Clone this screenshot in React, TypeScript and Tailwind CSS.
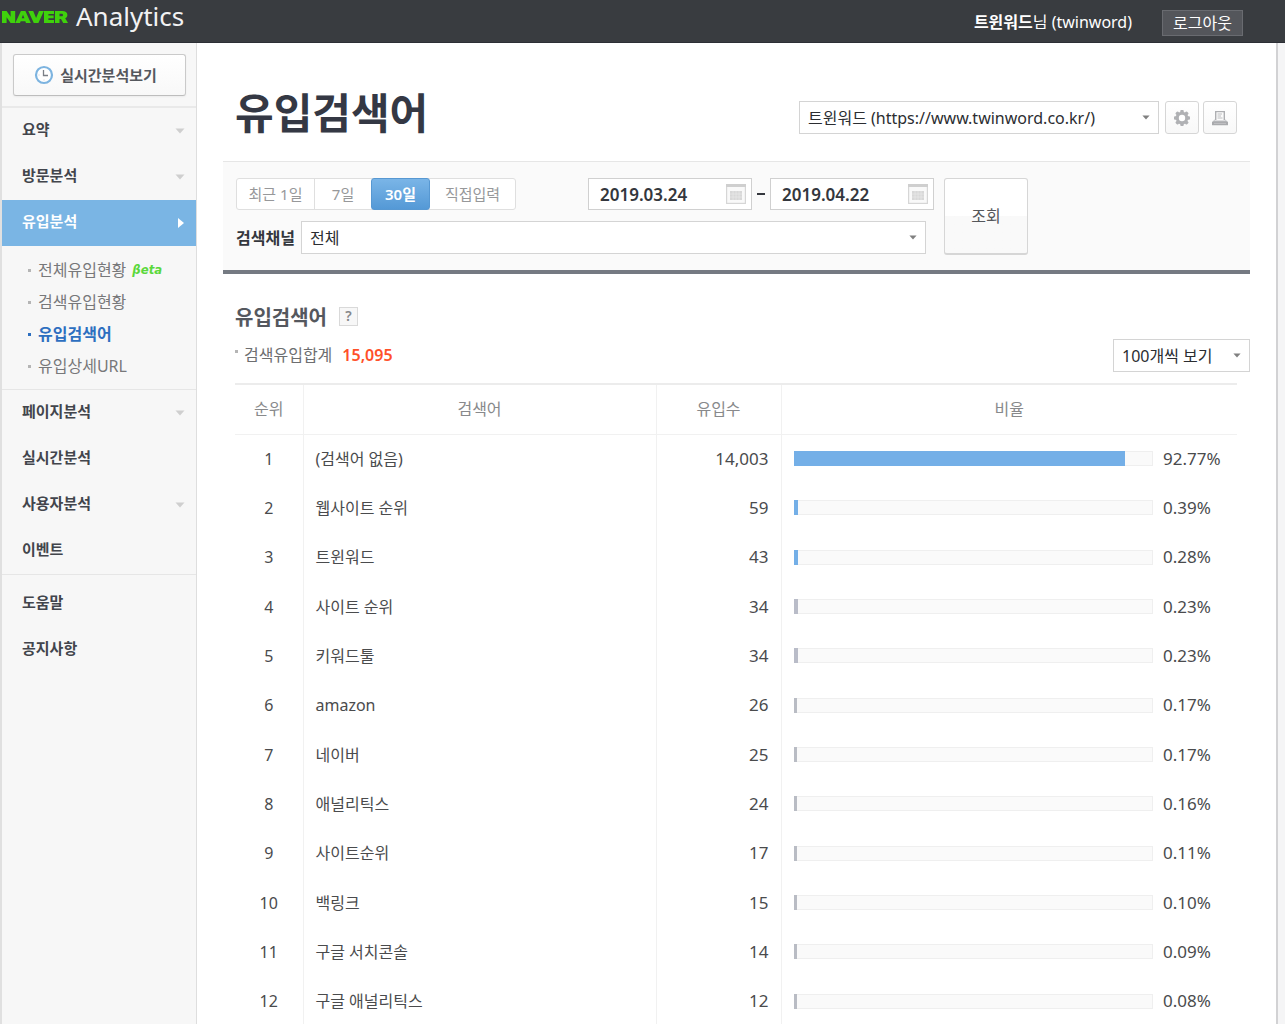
import type { ReactNode } from "react";

const fontBody = "font-['Noto_Sans','Noto_Sans_CJK_KR',sans-serif]";

type Row = { rank: number; keyword: string; visits: string; ratio: number; tone: "blue" | "gray" };

const rows: Row[] = [
  { rank: 1, keyword: "(검색어 없음)", visits: "14,003", ratio: 92.77, tone: "blue" },
  { rank: 2, keyword: "웹사이트 순위", visits: "59", ratio: 0.39, tone: "blue" },
  { rank: 3, keyword: "트윈워드", visits: "43", ratio: 0.28, tone: "blue" },
  { rank: 4, keyword: "사이트 순위", visits: "34", ratio: 0.23, tone: "gray" },
  { rank: 5, keyword: "키워드툴", visits: "34", ratio: 0.23, tone: "gray" },
  { rank: 6, keyword: "amazon", visits: "26", ratio: 0.17, tone: "gray" },
  { rank: 7, keyword: "네이버", visits: "25", ratio: 0.17, tone: "gray" },
  { rank: 8, keyword: "애널리틱스", visits: "24", ratio: 0.16, tone: "gray" },
  { rank: 9, keyword: "사이트순위", visits: "17", ratio: 0.11, tone: "gray" },
  { rank: 10, keyword: "백링크", visits: "15", ratio: 0.1, tone: "gray" },
  { rank: 11, keyword: "구글 서치콘솔", visits: "14", ratio: 0.09, tone: "gray" },
  { rank: 12, keyword: "구글 애널리틱스", visits: "12", ratio: 0.08, tone: "gray" },
];

function CaretDown({ className }: { className: string }) {
  return (
    <svg viewBox="0 0 10 6" className={className} aria-hidden="true">
      <path d="M0.5 0.5h9L5 5.5z" fill="currentColor" />
    </svg>
  );
}

function ClockIcon() {
  return (
    <svg width="20" height="20" viewBox="0 0 20 20" fill="none" aria-hidden="true">
      <circle cx="10" cy="10" r="8" fill="#fff" stroke="#7db4e0" strokeWidth="2.2" />
      <path d="M9.5 5v5.5H14" stroke="#7b7f86" strokeWidth="1.3" />
      <path d="M10 15.5v-1M4.5 10h1" stroke="#c4cbd2" strokeWidth="1" />
    </svg>
  );
}

function GearIcon() {
  return (
    <svg width="18" height="18" viewBox="0 0 18 18" aria-hidden="true">
      <g fill="#b0b1b4">
        {[0, 45, 90, 135].map((angle) => (
          <rect key={angle} x="7.25" y="1" width="3.5" height="16" rx="1" transform={`rotate(${angle} 9 9)`} />
        ))}
        <circle cx="9" cy="9" r="6.3" />
      </g>
      <circle cx="9" cy="9" r="3.2" fill="#fff" />
    </svg>
  );
}

function PrinterIcon() {
  return (
    <svg width="18" height="18" viewBox="0 0 18 18" fill="none" aria-hidden="true">
      <path d="M4.7 11V2.6h8.6V11" fill="#fbfbfb" stroke="#aeafb2" strokeWidth="1.4" />
      <path d="M6.5 5H11M6.5 7H10M6.5 9h5" stroke="#bdbec0" />
      <path d="M3.5 10v1.5h11V10l2 3.5h-15z" fill="#bfc0c3" />
      <rect x="1" y="12.5" width="16" height="3.8" rx="0.6" fill="#a9aaad" />
      <path d="M3 14.4h12" stroke="#c6c7c9" strokeWidth="0.8" />
    </svg>
  );
}

function CalendarIcon() {
  return (
    <svg width="20" height="20" viewBox="0 0 20 20" aria-hidden="true">
      <rect x="0.6" y="0.6" width="18.8" height="18.8" fill="#f9f9f9" stroke="#d6d6d6" strokeWidth="1.2" />
      <rect x="0" y="0" width="20" height="3" fill="#cfcfcf" />
      <rect x="4" y="7" width="12" height="9" fill="#d8d8d8" />
      <path d="M4 10h12M4 13h12M7 7v9M10 7v9M13 7v9" stroke="#e9e9e9" strokeWidth="0.7" />
    </svg>
  );
}

function MenuItem({ label, expandable, active }: { label: string; expandable?: boolean; active?: boolean }) {
  return (
    <a
      href="#"
      className={
        active
          ? "flex h-[46px] items-center justify-between bg-[#7ab5e4] pr-3 pb-1 pl-5 text-[15px] font-bold text-white"
          : "flex h-[46px] items-center justify-between pr-[11px] pb-1 pl-5 text-[15px] font-bold text-[#42454c]"
      }
    >
      {label}
      {expandable && <CaretDown className="mt-1 h-1.5 w-2.5 text-[#cfcfcf]" />}
      {active && (
        <svg width="6" height="10" viewBox="0 0 6 10" className="mt-1" aria-hidden="true">
          <path d="M0 0l6 5-6 5z" fill="#fff" />
        </svg>
      )}
    </a>
  );
}

function SubItem({ label, active, badge }: { label: string; active?: boolean; badge?: ReactNode }) {
  return (
    <li className="flex h-8 items-center">
      <span className={active ? "mr-[7px] size-[3px] bg-[#2d6fc0]" : "mr-[7px] size-[3px] bg-[#b5b5b5]"} />
      <a href="#" className={active ? "font-bold text-[#2d6fc0]" : "text-[#77787a]"}>
        {label}
      </a>
      {badge}
    </li>
  );
}

function Sidebar() {
  return (
    <nav className="w-[195px] shrink-0 border-r border-[#dedede] bg-[#f7f7f7]">
      <div className="border-b-2 border-[#e9e9e9] pt-[11px] pr-2.5 pb-2.5 pl-[11px]">
        <button
          type="button"
          className="flex h-[42px] w-full items-center justify-center gap-1.5 rounded-[3px] border border-[#cacaca] border-b-[#bdbdbd] bg-linear-to-b from-white to-[#f8f8f8] pr-2 text-[15px] font-bold text-[#55585e] shadow-xs"
        >
          <ClockIcon />
          실시간분석보기
        </button>
      </div>
      <MenuItem label="요약" expandable />
      <MenuItem label="방문분석" expandable />
      <MenuItem label="유입분석" active />
      <ul className="pt-2 pb-[7px] pl-[26px]">
        <SubItem
          label="전체유입현황"
          badge={
            <span className="ml-1.5 font-['DejaVu_Sans_Condensed','DejaVu_Sans',sans-serif] text-[13px] font-bold text-[#5bd83c] italic">
              βeta
            </span>
          }
        />
        <SubItem label="검색유입현황" />
        <SubItem label="유입검색어" active />
        <SubItem label="유입상세URL" />
      </ul>
      <div className="border-y border-[#e6e6e6]">
        <MenuItem label="페이지분석" expandable />
        <MenuItem label="실시간분석" />
        <MenuItem label="사용자분석" expandable />
        <MenuItem label="이벤트" />
      </div>
      <div className="pt-1.5">
        <MenuItem label="도움말" />
        <MenuItem label="공지사항" />
      </div>
    </nav>
  );
}

function Select({ id, value, className, label }: { id: string; value: string; className: string; label?: string }) {
  return (
    <div className={`relative ${className}`}>
      <select
        id={id}
        aria-label={label}
        className="h-[33px] w-full appearance-none border border-[#d4d4d4] bg-white pr-7 pl-2 text-base text-[#2b2d31]"
      >
        <option>{value}</option>
      </select>
      <CaretDown className="pointer-events-none absolute top-3.5 right-[9px] h-[5px] w-2 text-[#808080]" />
    </div>
  );
}

function DateField({ label, value }: { label: string; value: string }) {
  return (
    <div className="flex h-8 w-[164px] items-center border border-[#d0d0d0] bg-white pr-[5px] pl-[11px]">
      <input
        type="text"
        aria-label={label}
        defaultValue={value}
        className="min-w-0 flex-1 bg-transparent pt-0.5 text-[17px] font-semibold text-[#34373d] outline-none"
      />
      <button type="button" aria-label={`${label} 달력`}>
        <CalendarIcon />
      </button>
    </div>
  );
}

function Filters() {
  return (
    <form className="flex gap-2.5 border-t border-b-4 border-t-[#e6e6e6] border-b-[#757a82] bg-[#fafafa] pt-4 pb-[15px] pl-[13px]">
      <div className="flex w-[698px] flex-col gap-[11px]">
        <div className="flex items-center justify-between">
          <div className="flex h-8 rounded-[3px] border border-[#dfdfdf] bg-white text-[15px] text-[#97989a]">
            <button type="button" className="w-[78px] border-r border-[#dfdfdf]">
              최근 1일
            </button>
            <button type="button" className="w-14">
              7일
            </button>
            <button
              type="button"
              className="-my-px w-[59px] rounded-[3px] border border-[#5798d2] bg-linear-to-b from-[#7ab5e7] to-[#5499d6] font-semibold text-white"
            >
              30일
            </button>
            <button type="button" className="w-[85px]">
              직접입력
            </button>
          </div>
          <div className="flex items-center">
            <DateField label="시작일" value="2019.03.24" />
            <span className="mx-[5px] h-0.5 w-2 bg-[#34373d]" />
            <DateField label="종료일" value="2019.04.22" />
          </div>
        </div>
        <div className="flex items-center pr-2">
          <label htmlFor="channel" className="w-[65px] text-base font-semibold text-[#34373d]">
            검색채널
          </label>
          <Select id="channel" value="전체" className="flex-1" />
        </div>
      </div>
      <button
        type="submit"
        className="h-[77px] w-[84px] rounded-[3px] border border-b-2 border-[#d6d6d6] bg-linear-to-b from-white from-50% to-[#f9f9f9] to-50% text-base text-[#55575b]"
      >
        조회
      </button>
    </form>
  );
}

function RatioBar({ ratio, tone }: { ratio: number; tone: "blue" | "gray" }) {
  return (
    <div className="h-[15px] flex-1 border border-[#efefef] bg-[#fafafa]">
      <div
        className={
          tone === "blue"
            ? "-mt-px -ml-px h-[15px] min-w-[4px] bg-[#74afe7]"
            : ratio > 0.2
              ? "-mt-px -ml-px h-[15px] min-w-[4px] bg-[#b9bcc8]"
              : "-mt-px -ml-px h-[15px] min-w-[3px] bg-[#b9bcc4]"
        }
        style={{ width: `${ratio}%` }}
      />
    </div>
  );
}

function KeywordTable() {
  return (
    <table className="w-full table-fixed border-collapse text-base text-[#4a4b4d]">
      <colgroup>
        <col className="w-[68px]" />
        <col className="w-[353px]" />
        <col className="w-[125px]" />
        <col />
      </colgroup>
      <thead>
        <tr className="h-[50px] border-t-2 border-b border-t-[#ececec] border-b-[#f1f1f1] text-[#88898b]">
          <th className="border-r border-[#f1f1f1] font-normal">순위</th>
          <th className="border-r border-[#f1f1f1] font-normal">검색어</th>
          <th className="border-r border-[#f1f1f1] font-normal">유입수</th>
          <th className="font-normal">비율</th>
        </tr>
      </thead>
      <tbody>
        {rows.map((row) => (
          <tr key={row.rank} className="h-[49px] nth-[3n]:h-[50px]">
            <td className="border-r border-[#f1f1f1] text-center">{row.rank}</td>
            <td className="border-r border-[#f1f1f1] pl-3">{row.keyword}</td>
            <td className="border-r border-[#f1f1f1] pr-3 text-right text-[17px]">{row.visits}</td>
            <td className="pl-3">
              <div className="flex items-center">
                <RatioBar ratio={row.ratio} tone={row.tone} />
                <span className="w-[84px] pl-2.5 text-[17px]">{row.ratio.toFixed(2)}%</span>
              </div>
            </td>
          </tr>
        ))}
      </tbody>
    </table>
  );
}

const iconButton =
  "flex h-[33px] w-[34px] items-center justify-center rounded-[3px] border border-[#d6d6d6] bg-linear-to-b from-white to-[#f8f8f8]";

export default function App() {
  return (
    <div className={`flex min-h-screen flex-col bg-white ${fontBody}`}>
      <header className="flex h-[43px] items-center justify-between border-b border-[#2c2f35] bg-[#393c40] pr-[42px] pl-0.5 text-white">
        <a href="#" className="flex items-center gap-2 pb-2.5">
          <svg width="66" height="14" viewBox="0 0 66 14" className="mt-0.5" role="img" aria-label="NAVER">
            <g fill="#3fd10c">
              <path d="M0 1h4.6l4 5.8V1h4.6v12H8.6l-4-5.8V13H0z" />
              <path d="M18.9 1h4.5l5.4 12h-4.8l-.7-1.8h-4.6L18 13h-4.7zM21 4.8L19.7 8.3h2.7z" fillRule="evenodd" />
              <path d="M26.3 1h4.9l2.9 7 2.9-7h4.9l-5.5 12h-4.6z" />
              <path d="M42 1h10v3h-5.6v1.6h5.2v2.7h-5.2v1.6H52V13H42z" />
              <path
                d="M53 1h7.2c3.2 0 5.2 1.4 5.2 3.9 0 1.6-.8 2.7-2.2 3.3L66 13h-4.8l-2.2-4.1h-1.5V13H53zM57.5 3.8v2.5h2.2c.8 0 1.3-.5 1.3-1.25 0-.8-.5-1.25-1.3-1.25z"
                fillRule="evenodd"
              />
            </g>
          </svg>
          <span className="text-[26px] leading-8 text-[#f2f2f3]">Analytics</span>
        </a>
        <div className="flex items-center gap-[30px] pt-0.5 text-base">
          <span>
            <strong>트윈워드</strong>님 (twinword)
          </span>
          <button type="button" className="mt-0.5 h-[26px] w-[81px] border border-[#696b70] bg-[#54565b] leading-6">
            로그아웃
          </button>
        </div>
      </header>

      <div className="-ml-px flex flex-1 border-l-[3px] border-[#e0e0e0]">
        <Sidebar />
        <main className="min-w-0 flex-1 px-[26px]">
          <div className="flex h-[118px] items-end justify-between pr-[13px] pl-3">
            <h1 className="pb-[18px] text-[42px] leading-[60px] font-bold text-[#343844]">유입검색어</h1>
            <div className="flex gap-1 pb-[27px]">
              <Select
                id="site"
                label="사이트"
                value="트윈워드 (https://www.twinword.co.kr/)"
                className="mr-0.5 w-[360px]"
              />
              <button type="button" aria-label="설정" className={iconButton}>
                <GearIcon />
              </button>
              <button type="button" aria-label="인쇄" className={iconButton}>
                <PrinterIcon />
              </button>
            </div>
          </div>

          <Filters />

          <section className="pt-[29px]">
            <div className="flex items-center gap-3 pl-3">
              <h2 className="text-[20px] leading-[30px] font-bold text-[#55585e]">유입검색어</h2>
              <button
                type="button"
                aria-label="도움말"
                className="mb-1 flex size-[19px] items-center justify-center border border-[#d9d9d9] bg-[#f7f7f7] text-sm font-semibold text-[#85868a]"
              >
                ?
              </button>
            </div>
            <div className="flex items-start justify-between pt-1.5 pb-[11px]">
              <p className="flex items-center pt-1 pl-3 text-base text-[#6d6e70]">
                <span className="mr-1.5 mb-2 size-[3px] bg-[#b5b5b5]" />
                검색유입합계
                <strong className="ml-2.5 font-semibold text-[#ff5029]">15,095</strong>
              </p>
              <Select id="page-size" label="목록 개수" value="100개씩 보기" className="w-[137px]" />
            </div>
            <div className="pr-[13px] pl-3">
              <KeywordTable />
            </div>
          </section>
        </main>
        <div className="w-[9px] shrink-0 border-l-2 border-[#d2d2d4] bg-[#f5f5f6]" />
      </div>
    </div>
  );
}
